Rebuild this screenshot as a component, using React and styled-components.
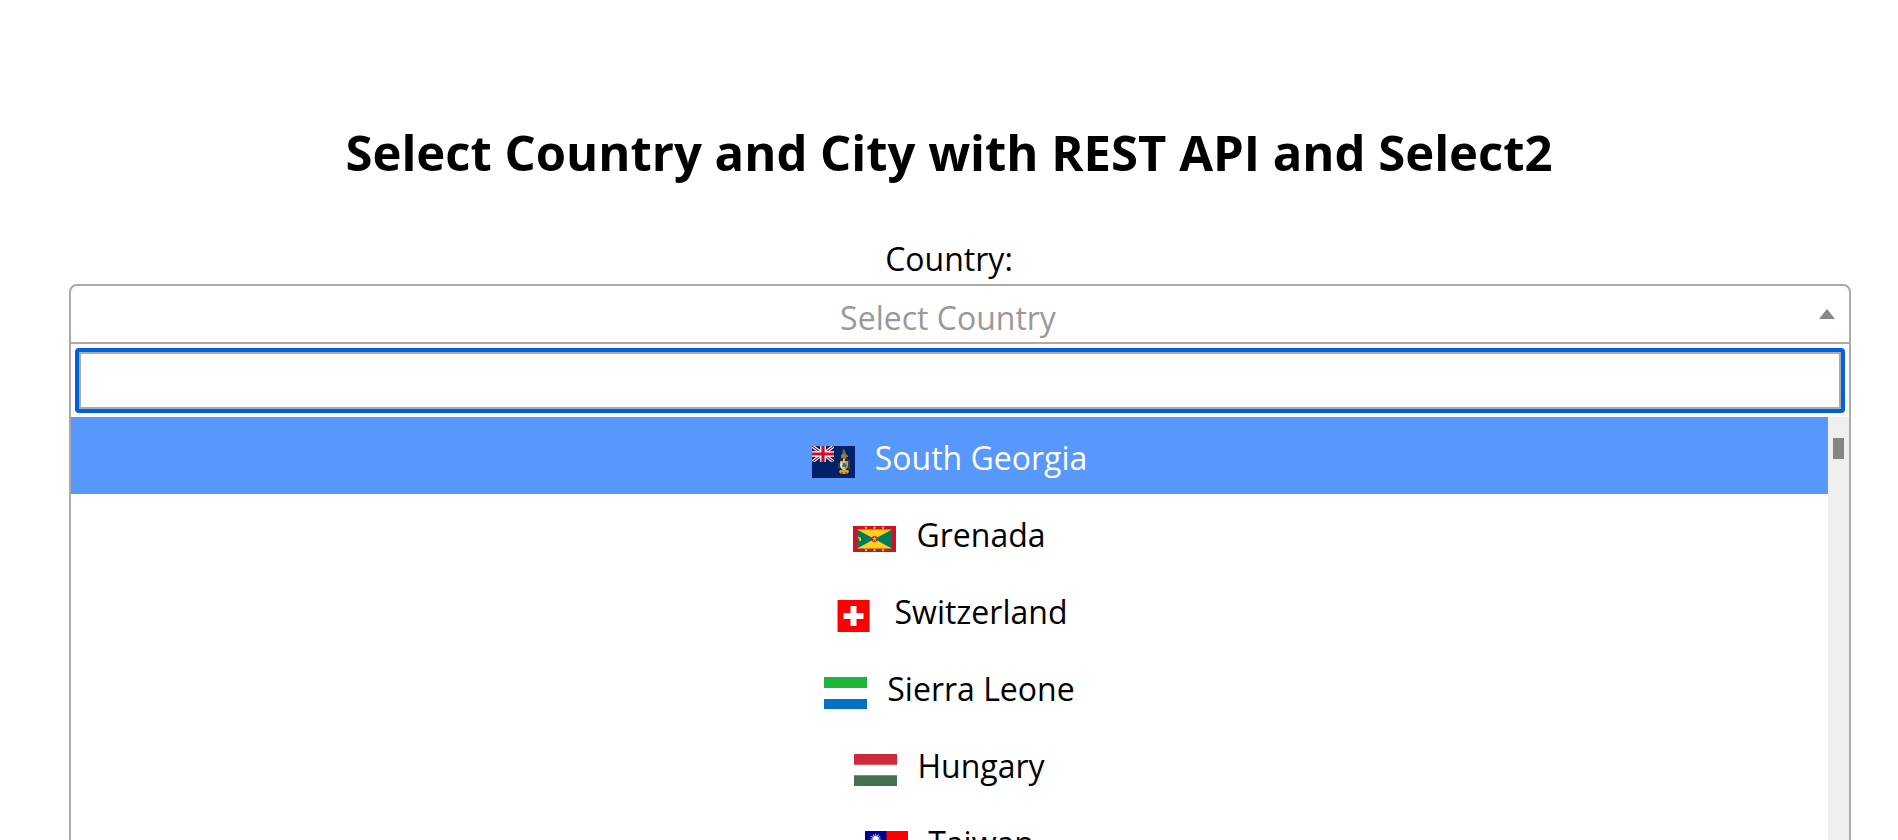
import React from "react";
import styled, { createGlobalStyle } from "styled-components";

const GlobalStyle = createGlobalStyle`
  *, *::before, *::after { box-sizing: border-box; }
  body {
    margin: 0;
    background: #fff;
    color: #000;
    font-family: "Segoe UI", "Open Sans", "Noto Sans", sans-serif;
    font-size: 32px;
    line-height: 44px;
  }
`;

const Page = styled.main`
  height: 100vh;
  overflow: hidden;
  padding-top: 118px;
`;

const Title = styled.h1`
  margin: 0 0 51px;
  font-size: 49px;
  line-height: 68px;
  font-weight: 700;
  text-align: center;
`;

const FieldLabel = styled.label`
  display: block;
  padding-bottom: 3px;
  text-align: center;
`;

const Dropdown = styled.div`
  margin: 0 47px 0 69px;
  border: 2px solid #aaa;
  border-radius: 8px 8px 0 0;
`;

const Selection = styled.div`
  display: grid;
  align-items: center;
  border-bottom: 2px solid #aaa;
`;

const CountrySelect = styled.select`
  grid-area: 1 / 1;
  width: 100%;
  height: 56px;
  padding: 8px 40px 0 16px;
  border: 0;
  outline: 0;
  appearance: none;
  background: transparent;
  color: #999;
  font: inherit;
  text-align: center;
  text-align-last: center;
`;

const Arrow = styled.svg`
  grid-area: 1 / 1;
  justify-self: end;
  width: 16px;
  height: 10px;
  margin-right: 14px;
  pointer-events: none;
`;

const SearchRow = styled.div`
  padding: 4px;
`;

const FocusRing = styled.div`
  padding: 4px;
  border-radius: 4px;
  background: #0060df;
`;

const SearchInput = styled.input`
  display: block;
  width: 100%;
  height: 57px;
  padding: 8px;
  border: 2px solid #aaa;
  border-radius: 0;
  outline: 0;
  background: #fff;
  font: inherit;
`;

const Results = styled.div`
  display: flex;
  height: 426px;
`;

const OptionList = styled.ul`
  flex: 1;
  margin: 0;
  padding: 0;
  overflow: hidden;
  list-style: none;
`;

const Option = styled.li`
  display: flex;
  align-items: center;
  justify-content: center;
  gap: 20px;
  height: 77px;
  padding-top: 4px;
  background: ${(p) => (p.$active ? "#5897fb" : "transparent")};
  color: ${(p) => (p.$active ? "#fff" : "#000")};
`;

const Flag = styled.svg`
  flex: none;
  width: 43px;
  height: 32px;
  margin-top: 8px;
`;

const ScrollTrack = styled.div`
  width: 21px;
  padding: 21px 5px;
  background: #efefef;
`;

const ScrollThumb = styled.div`
  height: 21px;
  background: #858585;
`;

const SouthGeorgiaFlag = () => (
  <Flag viewBox="0 0 43 32" aria-hidden="true">
    <path fill="#012169" d="M0 0h43v32H0z" />
    <path stroke="#fff" strokeWidth="3.4" d="M0 0l22 16M22 0L0 16" />
    <path stroke="#c8102e" strokeWidth="1.2" d="M0 0l22 16M22 0L0 16" />
    <path stroke="#fff" strokeWidth="5.6" d="M11 0v16M0 8h22" />
    <path stroke="#c8102e" strokeWidth="3.2" d="M11 0v16M0 8h22" />
    <path fill="#012169" d="M22 0h4v18h-4zM0 16h24v3H0z" />
    <path fill="#6e6252" d="M31 3l2 1 1 5h-4z" />
    <path fill="#8a7a4c" d="M29 9l4-2 3 3v3h-7z" />
    <path fill="#2f2a2a" d="M28 12h3v4h-3zM34 11h2v4h-2z" />
    <path fill="#9aa3ad" d="M28 15h8v6l-4 5-4-5z" />
    <path fill="#d9dde5" d="M29 15l3 5-2 3-2-3z" />
    <path fill="#2d7a3c" d="M32 16l3 4-3 3-2-3z" />
    <path fill="#f2c230" d="M31 13h2v4h-2zM31 21h2v3h-2z" />
    <path fill="#3f3c3f" d="M36 14h2v9l-2 2zM26 17h2v5h-2z" />
    <path fill="#e5a417" d="M28 24h8l1 2-2 2h-6l-2-2z" />
    <path fill="#a65a1b" d="M29 26h2v2h-2zM33 26h2v2h-2z" />
  </Flag>
);

const starAt = (cx, cy, r) =>
  Array.from({ length: 10 }, (_, i) => {
    const radius = i % 2 ? r * 0.4 : r;
    const angle = (Math.PI * i) / 5 - Math.PI / 2;
    return `${cx + radius * Math.cos(angle)},${cy + radius * Math.sin(angle)}`;
  }).join(" ");

const GrenadaFlag = () => (
  <Flag viewBox="0 0 43 26" aria-hidden="true">
    <path fill="#ce1126" d="M0 0h43v26H0z" />
    <path fill="#007a5e" d="M4 3.5h35v19H4z" />
    <path fill="#fcd116" d="M4 3.5h35L21.5 13zM4 22.5h35L21.5 13z" />
    <circle cx="21.5" cy="13" r="3" fill="#ce1126" />
    <polygon fill="#fcd116" points={starAt(21.5, 13, 2.7)} />
    {[13, 21.5, 30].map((x) => (
      <React.Fragment key={x}>
        <polygon fill="#fcd116" points={starAt(x, 1.8, 1.9)} />
        <polygon fill="#fcd116" points={starAt(x, 24.1, 1.9)} />
      </React.Fragment>
    ))}
    <path fill="#fcd116" d="M5 10.5l3 1.500v3l-2-.5z" />
    <path fill="#ce1126" d="M5.500 12.500h1v1h-1z" />
  </Flag>
);

const SwitzerlandFlag = () => (
  <Flag viewBox="0 0 32 32" aria-hidden="true">
    <path fill="#f00" d="M0 0h32v32H0z" />
    <path fill="#fff" d="M13 6h6v7h7v6h-7v7h-6v-7H6v-6h7z" />
  </Flag>
);

const SierraLeoneFlag = () => (
  <Flag viewBox="0 0 43 32" aria-hidden="true">
    <path fill="#fff" d="M0 0h43v32H0z" />
    <path fill="#1eb53a" d="M0 0h43v11H0z" />
    <path fill="#0072c6" d="M0 22h43v10H0z" />
  </Flag>
);

const HungaryFlag = () => (
  <Flag viewBox="0 0 43 32" aria-hidden="true">
    <path fill="#fff" d="M0 0h43v32H0z" />
    <path fill="#ce2939" d="M0 0h43v10.670H0z" />
    <path fill="#477050" d="M0 21.330h43V32H0z" />
  </Flag>
);

const TaiwanFlag = () => (
  <Flag viewBox="0 0 43 32" aria-hidden="true">
    <path fill="#f00" d="M0 0h43v32H0z" />
    <path fill="#000095" d="M0 0h21.500v16H0z" />
    {[0, 30, 60, 90, 120, 150].map((angle) => (
      <path
        key={angle}
        fill="#fff"
        d="M10.750 2l1.300 6-1.300 6-1.300-6z"
        transform={`rotate(${angle} 10.75 8)`}
      />
    ))}
    <circle cx="10.750" cy="8" r="3.300" fill="#fff" stroke="#000095" strokeWidth=".4" />
  </Flag>
);

const countries = [
  { name: "South Georgia", FlagIcon: SouthGeorgiaFlag },
  { name: "Grenada", FlagIcon: GrenadaFlag },
  { name: "Switzerland", FlagIcon: SwitzerlandFlag },
  { name: "Sierra Leone", FlagIcon: SierraLeoneFlag },
  { name: "Hungary", FlagIcon: HungaryFlag },
  { name: "Taiwan", FlagIcon: TaiwanFlag },
];

export default function App() {
  return (
    <>
      <GlobalStyle />
      <Page>
        <Title>Select Country and City with REST API and Select2</Title>
        <FieldLabel htmlFor="country">Country:</FieldLabel>
        <Dropdown>
          <Selection>
            <CountrySelect id="country" defaultValue="">
              <option value="">Select Country</option>
            </CountrySelect>
            <Arrow viewBox="0 0 16 10" aria-hidden="true">
              <path fill="#888" d="M0 10L8 0l8 10z" />
            </Arrow>
          </Selection>
          <SearchRow>
            <FocusRing>
              <SearchInput type="search" aria-label="Search countries" />
            </FocusRing>
          </SearchRow>
          <Results>
            <OptionList role="listbox" aria-label="Countries">
              {countries.map(({ name, FlagIcon }, i) => (
                <Option key={name} role="option" aria-selected={i === 0} $active={i === 0}>
                  <FlagIcon />
                  <span>{name}</span>
                </Option>
              ))}
            </OptionList>
            <ScrollTrack aria-hidden="true">
              <ScrollThumb />
            </ScrollTrack>
          </Results>
        </Dropdown>
      </Page>
    </>
  );
}
